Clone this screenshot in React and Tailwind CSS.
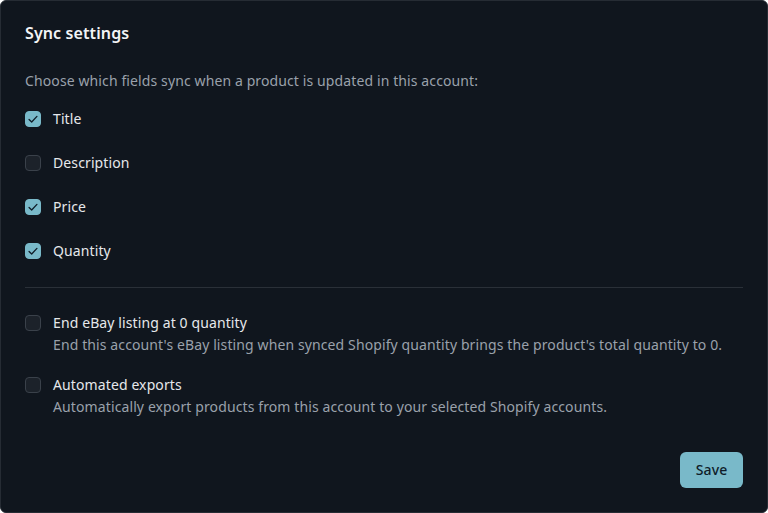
import { useState } from "react";

const FIELDS = [
  { key: "title", label: "Title", checked: true },
  { key: "description", label: "Description", checked: false },
  { key: "price", label: "Price", checked: true },
  { key: "quantity", label: "Quantity", checked: true },
];

const OPTIONS = [
  {
    key: "endListing",
    label: "End eBay listing at 0 quantity",
    help: "End this account's eBay listing when synced Shopify quantity brings the product's total quantity to 0.",
  },
  {
    key: "autoExport",
    label: "Automated exports",
    help: "Automatically export products from this account to your selected Shopify accounts.",
  },
];

const Checkbox = ({ checked, onChange }) => (
  <button
    type="button"
    onClick={onChange}
    className={
      checked
        ? "w-4 h-4 shrink-0 rounded-[4px] bg-[#79b9c9] border border-[#79b9c9] flex items-center justify-center"
        : "w-4 h-4 shrink-0 rounded-[4px] bg-[#1c222a] border border-[#3a414a] flex items-center justify-center"
    }
  >
    {checked && (
      <svg viewBox="0 0 16 16" className="w-3.5 h-3.5" fill="none">
        <path d="M3.5 8.5l3 3 6-6.5" stroke="#0f1d28" strokeWidth="1.5" strokeLinecap="round" strokeLinejoin="round" />
      </svg>
    )}
  </button>
);

const App = () => {
  const [fields, setFields] = useState(() =>
    Object.fromEntries(FIELDS.map(f => [f.key, f.checked]))
  );
  const [options, setOptions] = useState({ endListing: false, autoExport: false });

  return (
    <div
      className="w-[768px] h-[513px] bg-[#10161e] border border-[#262c34] rounded-md px-6 pt-5 flex flex-col text-[#e6e8eb] tracking-[0.007em]"
      style={{ fontFamily: '"Noto Sans", "Open Sans", sans-serif' }}
    >
      <h2 className="text-base leading-6 font-semibold text-[#f3f4f6]">Sync settings</h2>

      <p className="mt-[26px] text-sm leading-5 text-[#9aa1ab]">
        Choose which fields sync when a product is updated in this account:
      </p>

      <div className="mt-[18px] flex flex-col gap-6">
        {FIELDS.map(f => (
          <label key={f.key} className="flex items-center gap-3 text-sm leading-5">
            <Checkbox
              checked={fields[f.key]}
              onChange={() => setFields(prev => ({ ...prev, [f.key]: !prev[f.key] }))}
            />
            <span>{f.label}</span>
          </label>
        ))}
      </div>

      <div className="mt-[26px] h-px bg-[#2a3038]" />

      <div className="mt-[25px] flex flex-col gap-5">
        {OPTIONS.map(o => (
          <div key={o.key} className="flex gap-3">
            <div className="h-5 flex items-center">
              <Checkbox
                checked={options[o.key]}
                onChange={() => setOptions(prev => ({ ...prev, [o.key]: !prev[o.key] }))}
              />
            </div>
            <div className="flex flex-col gap-0.5 text-sm leading-5">
              <span>{o.label}</span>
              <span className="text-[#9aa1ab]">{o.help}</span>
            </div>
          </div>
        ))}
      </div>

      <div className="mt-[35px] flex justify-end">
        <button className="h-9 w-[63px] rounded-md bg-[#79b9c9] text-sm font-medium text-[#0f1d2a]">
          Save
        </button>
      </div>
    </div>
  );
};

export default App;
